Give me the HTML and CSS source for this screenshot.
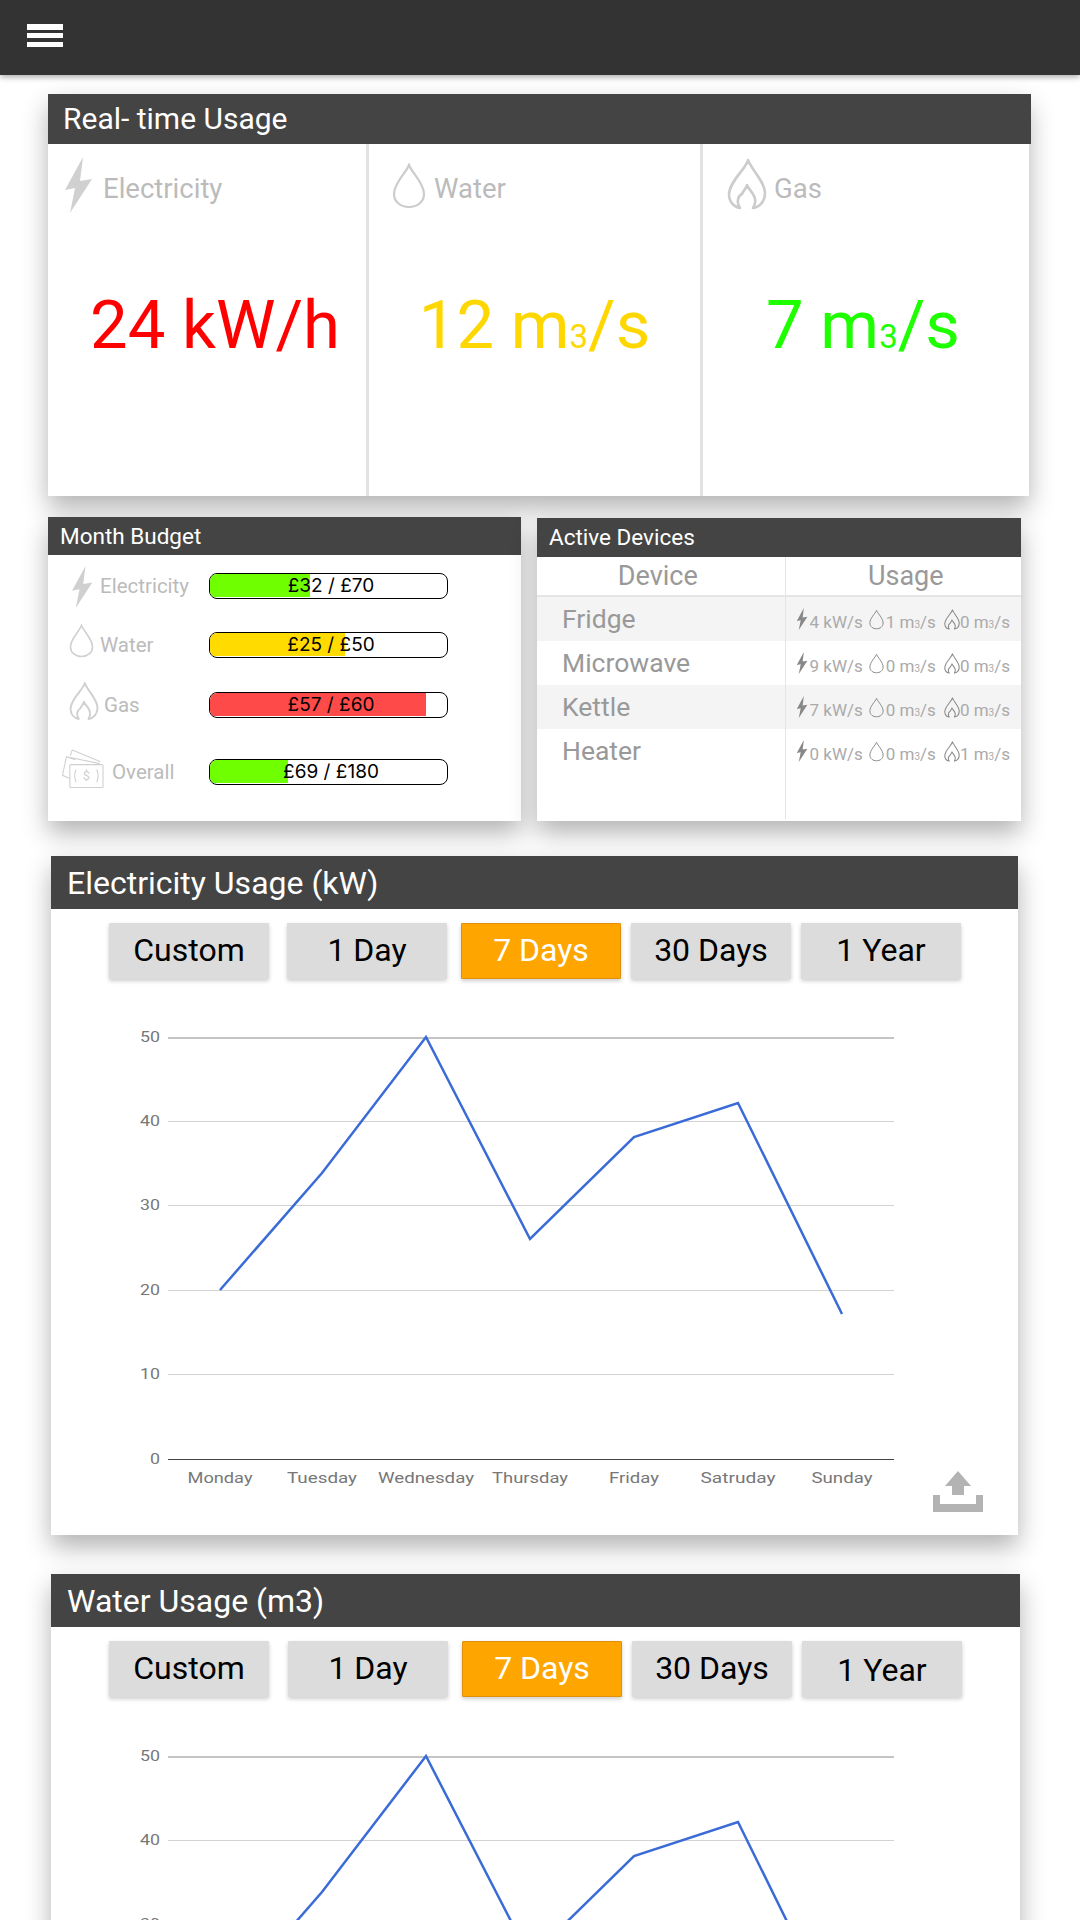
FILE: index.html
```html
<!DOCTYPE html>
<html lang="en">
<head>
    <meta charset="UTF-8">
    <meta name="viewport" content="width=device-width, initial-scale=1.0">
    <title>Energy Dashboard</title>
    <link rel="stylesheet" href="styles.css">
</head>
<body>
    <svg class="icon-defs" width="0" height="0">
        <defs>
            <symbol id="bolt" viewBox="0 0 30 56">
                <path d="M21 0 L3 33 L13 31 L8 56 L30 22 L18 24 Z" fill="currentColor"/>
            </symbol>
            <symbol id="drop" viewBox="0 0 34 46">
                <path d="M17 2 C14 10 2 20 2 31 C2 39 9 44 17 44 C25 44 32 39 32 31 C32 20 20 10 17 2 Z" fill="none" stroke="currentColor" stroke-width="2.2"/>
            </symbol>
            <symbol id="flame" viewBox="0 0 40 52">
                <path d="M21 2 C20 10 3 22 2 36 C2 44 7 49 13 50 C9 44 11 38 15 36 C16 33 19 31 20 27 C22 32 27 35 28 41 C29 45 27 48 26 50 C33 49 38 43 38 35 C38 24 26 14 21 2 Z" fill="none" stroke="currentColor" stroke-width="2.6" stroke-linejoin="round"/>
            </symbol>
            <symbol id="cash" viewBox="0 0 44 42">
                <g fill="none" stroke="currentColor" stroke-width="1.1">
                    <rect x="8.500" y="17" width="34" height="23.500" rx="1"/>
                    <path d="M8 31 L1 28 L5 9 L14 12 M5 9 L39 16 M11 2 L9 8 M11 2 L40 14"/>
                    <path d="M15 22 Q12 28 15 35 M36 22 Q39 28 36 35"/>
                </g>
                <text x="25.500" y="33" font-size="13" text-anchor="middle" fill="currentColor" font-family="Roboto, sans-serif">$</text>
            </symbol>
            <symbol id="upload" viewBox="0 0 50 42">
                <path d="M25 0 L38 15 L31 15 L31 24 L19 24 L19 15 L12 15 Z M0 24 L7 24 L7 33 L43 33 L43 24 L50 24 L50 41 L0 41 Z" fill="currentColor"/>
            </symbol>
            <symbol id="chart" viewBox="0 0 800 470">
                <line class="grid-top" x1="48" x2="774" y1="20" y2="20"/>
                <g class="grid">
                    <line x1="48" x2="774" y1="103.500" y2="103.500"/>
                    <line x1="48" x2="774" y1="187.500" y2="187.500"/>
                    <line x1="48" x2="774" y1="272.500" y2="272.500"/>
                    <line x1="48" x2="774" y1="356.500" y2="356.500"/>
                </g>
                <line class="axis" x1="48" x2="774" y1="441.500" y2="441.500"/>
                <g class="ylabels">
                    <text x="40" y="24" textLength="20" lengthAdjust="spacingAndGlyphs">50</text>
                    <text x="40" y="108" textLength="20" lengthAdjust="spacingAndGlyphs">40</text>
                    <text x="40" y="192" textLength="20" lengthAdjust="spacingAndGlyphs">30</text>
                    <text x="40" y="277" textLength="20" lengthAdjust="spacingAndGlyphs">20</text>
                    <text x="40" y="361" textLength="20" lengthAdjust="spacingAndGlyphs">10</text>
                    <text x="40" y="446" textLength="10" lengthAdjust="spacingAndGlyphs">0</text>
                </g>
                <g class="xlabels">
                    <text x="100" y="465" textLength="65" lengthAdjust="spacingAndGlyphs">Monday</text>
                    <text x="202" y="465" textLength="70" lengthAdjust="spacingAndGlyphs">Tuesday</text>
                    <text x="306" y="465" textLength="96" lengthAdjust="spacingAndGlyphs">Wednesday</text>
                    <text x="410" y="465" textLength="76" lengthAdjust="spacingAndGlyphs">Thursday</text>
                    <text x="514" y="465" textLength="50" lengthAdjust="spacingAndGlyphs">Friday</text>
                    <text x="618" y="465" textLength="75" lengthAdjust="spacingAndGlyphs">Satruday</text>
                    <text x="722" y="465" textLength="61" lengthAdjust="spacingAndGlyphs">Sunday</text>
                </g>
                <polyline class="line" points="100,272 202,155 306,19 410,221 514,119 618,85 722,296"/>
            </symbol>
        </defs>
    </svg>

    <div class="topbar">
        <div class="burger"><span></span><span></span><span></span></div>
    </div>

    <div class="card realtime">
        <div class="card-title">Real- time Usage</div>
        <div class="cells">
            <div class="cell">
                <div class="cell-head">
                    <svg class="ico-bolt"><use href="#bolt"/></svg>
                    <span>Electricity</span>
                </div>
                <div class="reading red">24 kW/h</div>
            </div>
            <div class="cell">
                <div class="cell-head">
                    <svg class="ico-drop"><use href="#drop"/></svg>
                    <span>Water</span>
                </div>
                <div class="reading yellow">12 m<small>3</small>/s</div>
            </div>
            <div class="cell">
                <div class="cell-head">
                    <svg class="ico-flame"><use href="#flame"/></svg>
                    <span>Gas</span>
                </div>
                <div class="reading green">7 m<small>3</small>/s</div>
            </div>
        </div>
    </div>

    <div class="row">
        <div class="card budget">
            <div class="card-title small">Month Budget</div>
            <div class="budget-row">
                <svg class="b-bolt"><use href="#bolt"/></svg>
                <span class="b-label">Electricity</span>
                <div class="bar"><div class="fill lime" style="width: 42%"></div><span>£32 / £70</span></div>
            </div>
            <div class="budget-row">
                <svg class="b-drop"><use href="#drop"/></svg>
                <span class="b-label">Water</span>
                <div class="bar"><div class="fill gold" style="width: 57%"></div><span>£25 / £50</span></div>
            </div>
            <div class="budget-row">
                <svg class="b-flame"><use href="#flame"/></svg>
                <span class="b-label gas">Gas</span>
                <div class="bar"><div class="fill coral" style="width: 91%"></div><span>£57 / £60</span></div>
            </div>
            <div class="budget-row">
                <svg class="b-cash"><use href="#cash"/></svg>
                <span class="b-label overall">Overall</span>
                <div class="bar"><div class="fill lime" style="width: 33%"></div><span>£69 / £180</span></div>
            </div>
        </div>

        <div class="card devices">
            <div class="card-title small">Active Devices</div>
            <table>
                <thead>
                    <tr><th>Device</th><th>Usage</th></tr>
                </thead>
                <tbody>
                    <tr>
                        <td class="name">Fridge</td>
                        <td class="usage"><div class="usage-line">
                            <svg class="u-bolt"><use href="#bolt"/></svg><span class="u-val">4 kW/s</span>
                            <svg class="u-drop"><use href="#drop"/></svg><span class="u-val">1 m<small>3</small>/s</span>
                            <svg class="u-flame"><use href="#flame"/></svg><span class="u-val">0 m<small>3</small>/s</span>
                        </div></td>
                    </tr>
                    <tr>
                        <td class="name">Microwave</td>
                        <td class="usage"><div class="usage-line">
                            <svg class="u-bolt"><use href="#bolt"/></svg><span class="u-val">9 kW/s</span>
                            <svg class="u-drop"><use href="#drop"/></svg><span class="u-val">0 m<small>3</small>/s</span>
                            <svg class="u-flame"><use href="#flame"/></svg><span class="u-val">0 m<small>3</small>/s</span>
                        </div></td>
                    </tr>
                    <tr>
                        <td class="name">Kettle</td>
                        <td class="usage"><div class="usage-line">
                            <svg class="u-bolt"><use href="#bolt"/></svg><span class="u-val">7 kW/s</span>
                            <svg class="u-drop"><use href="#drop"/></svg><span class="u-val">0 m<small>3</small>/s</span>
                            <svg class="u-flame"><use href="#flame"/></svg><span class="u-val">0 m<small>3</small>/s</span>
                        </div></td>
                    </tr>
                    <tr class="last">
                        <td class="name">Heater</td>
                        <td class="usage"><div class="usage-line">
                            <svg class="u-bolt"><use href="#bolt"/></svg><span class="u-val">0 kW/s</span>
                            <svg class="u-drop"><use href="#drop"/></svg><span class="u-val">0 m<small>3</small>/s</span>
                            <svg class="u-flame"><use href="#flame"/></svg><span class="u-val">1 m<small>3</small>/s</span>
                        </div></td>
                    </tr>
                </tbody>
            </table>
        </div>
    </div>

    <div class="card usage-card">
        <div class="card-title large">Electricity Usage (kW)</div>
        <div class="tabs">
            <button>Custom</button>
            <button>1 Day</button>
            <button class="active">7 Days</button>
            <button>30 Days</button>
            <button>1 Year</button>
        </div>
        <svg class="chart"><use href="#chart"/></svg>
        <svg class="export"><use href="#upload"/></svg>
    </div>

    <div class="card usage-card water">
        <div class="card-title large">Water Usage (m3)</div>
        <div class="tabs">
            <button>Custom</button>
            <button>1 Day</button>
            <button class="active">7 Days</button>
            <button>30 Days</button>
            <button>1 Year</button>
        </div>
        <svg class="chart"><use href="#chart"/></svg>
    </div>
</body>
</html>
```

FILE: styles.css
```css
html, body {
    height: 1920px;
    overflow: hidden;
}

body {
    margin: 0;
    background-color: #fff;
    font-family: Roboto, Arial, sans-serif;
}

.icon-defs {
    position: absolute;
}

.topbar {
    height: 75px;
    background-color: #333;
    box-shadow: 0 2px 6px rgba(0, 0, 0, 0.35);
    padding: 24px 0 0 27px;
    box-sizing: border-box;
}

.burger {
    width: 36px;
}

.burger span {
    display: block;
    height: 5.500px;
    background-color: #fff;
    margin-bottom: 3.250px;
}

.card {
    background-color: #fff;
    box-shadow: 0 12px 24px rgba(0, 0, 0, 0.3);
}

.card-title {
    background-color: #444;
    color: #fff;
    font-size: 30px;
    line-height: 50px;
    padding-left: 15px;
}

.card-title.small {
    font-size: 22.500px;
    line-height: 38px;
    padding-left: 12px;
}

.card-title.large {
    font-size: 32px;
    line-height: 51px;
    padding: 2px 0 0 16px;
}

/* real time */
.realtime {
    margin: 19px 51px 0 48px;
    height: 402px;
}

.realtime .card-title {
    margin-right: -2px;
}

.cells {
    display: flex;
    height: 352px;
}

.cell {
    box-sizing: border-box;
    border-right: 3px solid #e2e2e2;
    width: 321px;
}

.cell:nth-child(2) {
    width: 334px;
}

.cell:nth-child(3) {
    width: 326px;
    border-right: none;
    padding-right: 6px;
}

.cell:nth-child(1) .reading {
    padding-left: 16px;
}

.cell-head {
    display: flex;
    align-items: center;
    height: 60px;
    margin-top: 14px;
    padding-left: 13px;
    font-size: 27.500px;
    color: #bbb;
    gap: 9px;
}

.ico-bolt {
    width: 32px;
    height: 56px;
    color: #d0d0d0;
    margin: 0 1px 6px 0;
}

.ico-drop {
    width: 34px;
    height: 46px;
    color: #ccc;
    margin: 0 -1px 4px 10px;
}

.ico-flame {
    width: 42px;
    height: 52px;
    color: #ccc;
    margin: 0 -3px 8px 10px;
}

.reading {
    font-size: 67px;
    text-align: center;
    margin-top: 68px;
}

.reading small {
    font-size: 33px;
}

.red { color: #f00; }
.yellow { color: #ffd700; }
.green { color: #1eff00; }

/* budget + devices */
.row {
    display: flex;
    margin: 21px 59px 0 48px;
    gap: 16px;
}

.budget {
    width: 473px;
    height: 304px;
}

.budget-row {
    position: relative;
    height: 26px;
    margin-top: 33px;
    padding-left: 161px;
}

.budget-row:nth-child(2) {
    margin-top: 18px;
}

.budget-row:nth-child(4) {
    margin-top: 34px;
}

.budget-row:nth-child(5) {
    margin-top: 41px;
}

.budget-row svg {
    position: absolute;
    color: #d0d0d0;
}

.b-label {
    position: absolute;
    left: 52px;
    top: 0;
    font-size: 20.500px;
    line-height: 26px;
    color: #bbb;
}

.b-label.gas {
    left: 56px;
}

.b-label.overall {
    left: 64px;
}

.b-bolt { left: 21px; top: -7px; width: 24px; height: 42px; }
.b-drop { left: 21px; top: -8px; width: 25px; height: 34px; }
.b-flame { left: 21px; top: -11px; width: 30px; height: 40px; }
.b-cash { left: 13px; top: -11px; width: 44px; height: 41px; }

.bar {
    position: relative;
    box-sizing: border-box;
    width: 239px;
    height: 26px;
    padding-left: 5px;
    border: 1px solid #000;
    border-radius: 8px;
    overflow: hidden;
    text-align: center;
    font-family: Inter, Arial, sans-serif;
    font-size: 19px;
    line-height: 24px;
    color: #000;
}

.bar span {
    position: relative;
}

.fill {
    position: absolute;
    left: 0;
    top: 0;
    bottom: 1px;
}

.lime { background-color: #70ff00; }
.gold { background-color: #ffdb00; }
.coral { background-color: #ff4a4a; }

.devices {
    width: 484px;
    height: 303px;
    margin-top: 1px;
}

.devices .card-title.small {
    line-height: 39px;
}

.devices table {
    width: 100%;
    table-layout: fixed;
    border-collapse: collapse;
    color: #999;
}

.devices th {
    font-weight: 400;
    font-size: 27px;
    height: 38px;
    padding: 0;
    border-bottom: 2px solid #e5e5e5;
}

.devices th:first-child {
    width: 248px;
    padding-right: 6px;
    box-sizing: border-box;
}

.devices th + th {
    border-left: 1px solid #e5e5e5;
    padding-left: 5px;
}

.devices td {
    padding: 0;
    height: 44px;
    vertical-align: top;
}

.devices tbody tr:nth-child(odd) {
    background-color: #f4f4f4;
}

.devices tbody tr.last {
    background-color: #fff;
}

.devices tr.last td {
    height: 90px;
}

.name {
    font-size: 26.500px;
    line-height: 43px;
    padding-left: 25px !important;
}

.usage {
    border-left: 1px solid #e5e5e5;
}

.usage-line {
    display: flex;
    align-items: center;
    height: 44px;
    padding-left: 9px;
    white-space: nowrap;
    font-size: 17px;
    color: #aaa;
}

.usage-line svg {
    color: #888;
}

.u-val {
    padding-top: 6px;
}

.u-val small {
    font-size: 10px;
}

.u-bolt { width: 13px; height: 22px; margin-right: 2px; }
.u-drop { width: 15px; height: 21px; margin: 0 2px 0 6px; }
.u-flame { width: 16px; height: 21px; margin: 0 0 0 8px; }

/* chart cards */
.usage-card {
    position: relative;
    margin: 35px 62px 0 51px;
    height: 679px;
}

.usage-card.water {
    margin: 39px 60px 0 51px;
    height: 700px;
}

.tabs {
    display: flex;
    padding: 14px 0 0 58px;
}

.tabs button {
    width: 160px;
    height: 56px;
    margin-right: 10px;
    padding: 0 0 2px;
    border: none;
    border-radius: 1px;
    background-color: #dcdcdc;
    box-shadow: 0 2px 4px rgba(0, 0, 0, 0.2);
    font-family: Roboto, Arial, sans-serif;
    font-size: 32px;
    color: #000;
}

.tabs button:nth-child(1) {
    margin-right: 18px;
}

.tabs button:nth-child(2) {
    margin-right: 14px;
}

.water .tabs button:nth-child(1) {
    margin-right: 19px;
}

.water .tabs button:last-child {
    padding: 2px 0 0;
}

.tabs .active {
    background-color: #ffa500;
    color: #fff;
    border: 1px solid #e0900a;
}

.chart {
    display: block;
    width: 800px;
    height: 470px;
    margin: 39px 0 0 69px;
}

.water .chart {
    margin-top: 40px;
}

.export {
    position: absolute;
    left: 882px;
    top: 615px;
    width: 50px;
    height: 42px;
    color: #b3b3b3;
}

.grid-top {
    stroke: #c4c4c4;
    stroke-width: 2;
}

.grid line {
    stroke: #d2d2d2;
    stroke-width: 1;
}

.axis {
    stroke: #444;
    stroke-width: 1;
}

.ylabels text {
    font-size: 15.500px;
    fill: #777;
    text-anchor: end;
}

.xlabels text {
    font-size: 15.500px;
    fill: #777;
    text-anchor: middle;
}

.line {
    fill: none;
    stroke: #3a6bd6;
    stroke-width: 2.500;
}
```
